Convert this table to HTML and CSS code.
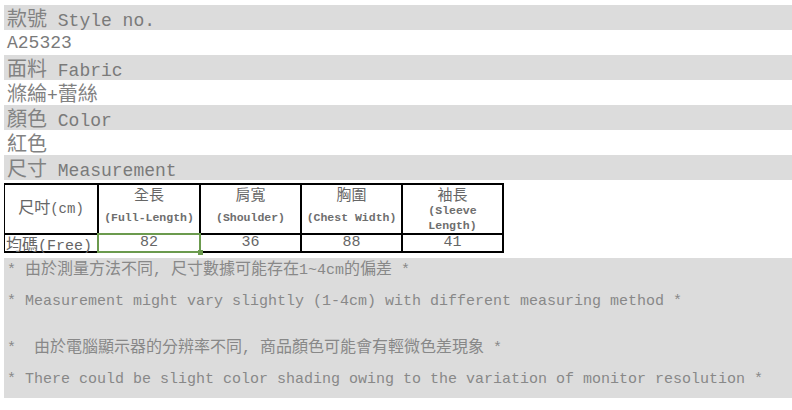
FILE: index.html
```html
<!DOCTYPE html>
<html lang="zh-Hant">
<head>
<meta charset="utf-8">
<title>Size info</title>
<link rel="stylesheet" href="styles.css">
</head>
<body>
<div class="info">
  <div class="row shade"><span class="cjk">款號</span> Style no.</div>
  <div class="row">A25323</div>
  <div class="row shade"><span class="cjk">面料</span> Fabric</div>
  <div class="row"><span class="cjk">滌綸</span>+<span class="cjk">蕾絲</span></div>
  <div class="row shade"><span class="cjk">顏色</span> Color</div>
  <div class="row"><span class="cjk">紅色</span></div>
  <div class="row shade"><span class="cjk">尺寸</span> Measurement</div>
</div>

<table class="size">
  <colgroup>
    <col class="c1"><col class="c2"><col class="c3"><col class="c4"><col class="c5">
  </colgroup>
  <tr class="head">
    <td><div class="first"><span class="tcjk">尺吋</span>(cm)</div></td>
    <td><div class="hcell"><div class="hz">全長</div><div class="sub">(Full-Length)</div></div></td>
    <td><div class="hcell"><div class="hz">肩寬</div><div class="sub">(Shoulder)</div></div></td>
    <td><div class="hcell"><div class="hz">胸圍</div><div class="sub">(Chest Width)</div></div></td>
    <td><div class="hcell"><div class="hz">袖長</div><div class="sub">(Sleeve<br>Length)</div></div></td>
  </tr>
  <tr class="data">
    <td><div class="dcell"><span class="tcjk">均碼</span>(Free)</div></td>
    <td class="selected"><div class="dcell">82</div></td>
    <td><div class="dcell">36</div></td>
    <td><div class="dcell">88</div></td>
    <td><div class="dcell">41</div></td>
  </tr>
</table>

<div class="notes">
  <p class="line">* <span class="ncjk">由於測量方法不同</span>, <span class="ncjk">尺寸數據可能存在</span>1~4cm<span class="ncjk">的偏差</span> *</p>
  <p class="line">* Measurement might vary slightly (1-4cm) with different measuring method *</p>
  <p class="line gap">*&nbsp; <span class="ncjk">由於電腦顯示器的分辨率不同</span>, <span class="ncjk">商品顏色可能會有輕微色差現象</span> *</p>
  <p class="line">* There could be slight color shading owing to the variation of monitor resolution *</p>
</div>
</body>
</html>
```

FILE: styles.css
```css
html, body {
  background: #ffffff;
}
body {
  margin: 5px 0 0 4px;
  font-family: "Liberation Mono", "Noto Sans CJK TC", monospace;
  color: #7a7a7a;
}

.info .row {
  box-sizing: border-box;
  height: 25px;
  padding: 3px 0 0 3px;
  line-height: 20px;
  font-size: 18px;
  white-space: nowrap;
}
.info .row.shade {
  background: #dcdcdc;
}
.cjk {
  font-family: "Noto Sans CJK TC", sans-serif;
  font-size: 20px;
  line-height: 20px;
  font-weight: 400;
  color: #828282;
}

.size {
  border-collapse: collapse;
  table-layout: fixed;
  width: 499px;
  margin: 3px 0 0 -1px;
  color: #666666;
}
.size .c1 { width: 94px; }
.size .c2 { width: 102px; }
.size .c3 { width: 101px; }
.size .c4 { width: 101px; }
.size .c5 { width: 101px; }
.size td {
  border: 2px solid #000000;
  padding: 0;
  text-align: center;
  vertical-align: middle;
}
.first {
  height: 48px;
  line-height: 48px;
  font-size: 14px;
  white-space: nowrap;
}
.tcjk {
  font-family: "Noto Sans CJK TC", sans-serif;
  font-size: 16px;
  line-height: 16px;
}
.hcell {
  height: 48px;
  display: flex;
  flex-direction: column;
}
.hz {
  height: 17px;
  line-height: 17px;
  font-family: "Noto Sans CJK TC", sans-serif;
  font-size: 15px;
}
.sub {
  height: 31px;
  display: flex;
  align-items: center;
  justify-content: center;
  line-height: 15px;
  font-size: 11.5px;
  font-weight: 700;
  color: #6e6e6e;
}
.dcell {
  height: 16px;
  line-height: 16px;
  font-size: 15px;
  white-space: nowrap;
}
.size .data td:first-child .dcell {
  text-align: left;
  padding-left: 1px;
}
.selected {
  position: relative;
}
.selected::before {
  content: "";
  position: absolute;
  top: -2px;
  left: -2px;
  right: -2px;
  bottom: -2px;
  border: 2px solid #6b9a4e;
  z-index: 1;
}
.selected::after {
  content: "";
  position: absolute;
  right: -4px;
  bottom: -4px;
  width: 5px;
  height: 5px;
  background: #6b9a4e;
  z-index: 2;
}

.notes {
  margin-top: 5px;
  background: #dcdcdc;
  padding: 1px 0 6px 3px;
  color: #888888;
}
.notes .line {
  margin: 0;
  height: 24px;
  line-height: 24px;
  font-size: 15px;
  white-space: nowrap;
}
.notes .line + .line {
  margin-top: 7px;
}
.notes .line.gap {
  margin-top: 23px;
}
.ncjk {
  font-family: "Noto Sans CJK TC", sans-serif;
  font-size: 16px;
  line-height: 16px;
}
```
